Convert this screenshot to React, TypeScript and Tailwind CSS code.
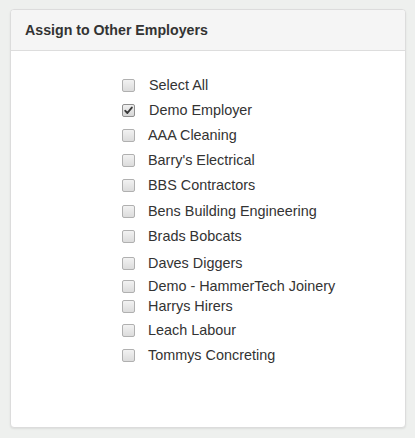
import React from "react";

const rows: { label: string; mt: string; checked?: boolean; tx: string }[] = [
  { label: "Select All", mt: "mt-[24px]", tx: "ml-[14px]" },
  { label: "Demo Employer", mt: "mt-[5px]", checked: true, tx: "ml-[14px]" },
  { label: "AAA Cleaning", mt: "mt-[5px]", tx: "ml-[13px]" },
  { label: "Barry's Electrical", mt: "mt-[5px]", tx: "ml-[13px]" },
  { label: "BBS Contractors", mt: "mt-[5px]", tx: "ml-[13px]" },
  { label: "Bens Building Engineering", mt: "mt-[6px]", tx: "ml-[13px]" },
  { label: "Brads Bobcats", mt: "mt-[5px]", tx: "ml-[13px]" },
  { label: "Daves Diggers", mt: "mt-[7px]", tx: "ml-[13px]" },
  { label: "Demo - HammerTech Joinery", mt: "mt-[3px]", tx: "ml-[13px]" },
  { label: "Harrys Hirers", mt: "mt-[0px]", tx: "ml-[13px]" },
  { label: "Leach Labour", mt: "mt-[4px]", tx: "ml-[13px]" },
  { label: "Tommys Concreting", mt: "mt-[5px]", tx: "ml-[13px]" },
];

function Box({ checked }: { checked?: boolean }) {
  return (
    <span
      className={
        checked
          ? "flex h-[13px] w-[13px] items-center justify-center rounded-[2px] border border-[#8f8f8f] bg-gradient-to-b from-[#f0f0f0] to-[#d6d6d6]"
          : "flex h-[13px] w-[13px] items-center justify-center rounded-[2px] border border-[#b0b0b0] bg-gradient-to-b from-[#f2f2f2] to-[#dcdcdc]"
      }
    >
      {checked && (
        <svg width="9" height="9" viewBox="0 0 9 9">
          <path d="M1.3 4.8 L3.4 7 L7.8 1.6" fill="none" stroke="#3a3a3a" strokeWidth="1.9" strokeLinecap="round" strokeLinejoin="round" />
        </svg>
      )}
    </span>
  );
}

export default function App() {
  return (
    <div
      className="h-[438px] w-[415px] bg-[#eef0ee] pl-[10px] pt-[9px]"
      style={{ fontFamily: '"Liberation Sans", Arial, sans-serif' }}
    >
      <div className="flex h-[419px] w-[396px] flex-col overflow-hidden rounded-[4px] border border-[#dcdcdc] bg-white shadow-[0_1px_2px_rgba(0,0,0,0.08)]">
        <div className="flex h-[41px] shrink-0 items-center border-b border-[#dddddd] bg-[#f5f5f5] pl-[14px] pt-[1px]">
          <span className="text-[14.2px] font-bold text-[#333333]">Assign to Other Employers</span>
        </div>
        <div className="flex flex-col pl-[111px]">
          {rows.map((r) => (
            <div key={r.label} className={"flex h-[20px] items-center " + r.mt}>
              <Box checked={r.checked} />
              <span className={"text-[14.4px] leading-[20px] text-[#333333] " + r.tx}>{r.label}</span>
            </div>
          ))}
        </div>
      </div>
    </div>
  );
}
